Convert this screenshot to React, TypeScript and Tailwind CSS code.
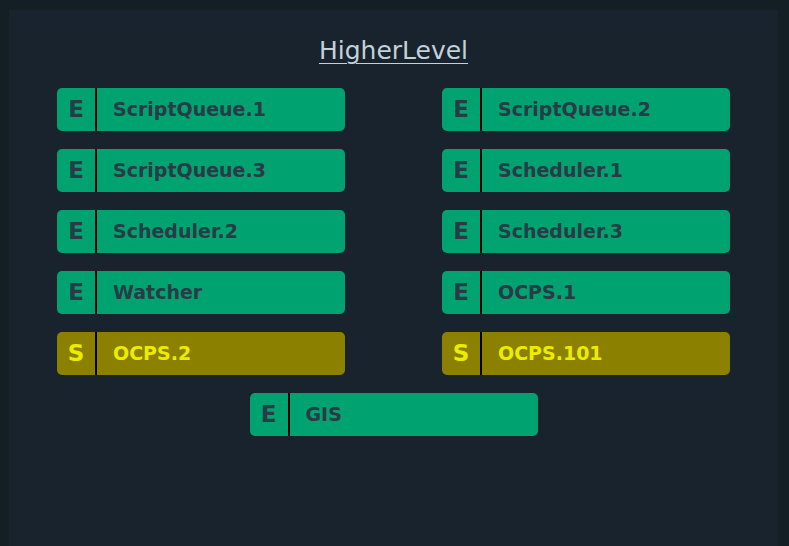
import React from "react";

type Item = { kind: "E" | "S"; name: string };

const items: Item[] = [
  { kind: "E", name: "ScriptQueue.1" },
  { kind: "E", name: "ScriptQueue.2" },
  { kind: "E", name: "ScriptQueue.3" },
  { kind: "E", name: "Scheduler.1" },
  { kind: "E", name: "Scheduler.2" },
  { kind: "E", name: "Scheduler.3" },
  { kind: "E", name: "Watcher" },
  { kind: "E", name: "OCPS.1" },
  { kind: "S", name: "OCPS.2" },
  { kind: "S", name: "OCPS.101" },
];

function CscRow({ item }: { item: Item }) {
  const standby = item.kind === "S";
  return (
    <div
      className={
        standby
          ? "flex h-[43px] w-[288px] rounded-[5px] bg-[#8b8000] text-[#ecec00]"
          : "flex h-[43px] w-[288px] rounded-[5px] bg-[#00a36f] text-[#2a3a47]"
      }
    >
      <div className="flex w-[40px] items-center justify-center border-r-2 border-black text-[23px] font-bold">
        {item.kind}
      </div>
      <div className="flex items-center pl-[16px] text-[19px] font-bold">{item.name}</div>
    </div>
  );
}

export default function App() {
  return (
    <div className="h-[546px] bg-[#131e25] pl-[9px] pr-[11px] pt-[10px] font-['DejaVu_Sans',sans-serif]">
      <div className="flex h-full flex-col items-center bg-[#18232d] pt-[26px]">
        <h1 className="text-[25px] font-normal leading-[29px] text-[#c3d1da] underline underline-offset-[4px] decoration-1">
          HigherLevel
        </h1>
        <div className="mt-[23px] grid grid-cols-[288px_288px] gap-x-[97px] gap-y-[18px]">
          {items.map((it) => (
            <CscRow key={it.name} item={it} />
          ))}
        </div>
        <div className="mt-[18px]">
          <CscRow item={{ kind: "E", name: "GIS" }} />
        </div>
      </div>
    </div>
  );
}
